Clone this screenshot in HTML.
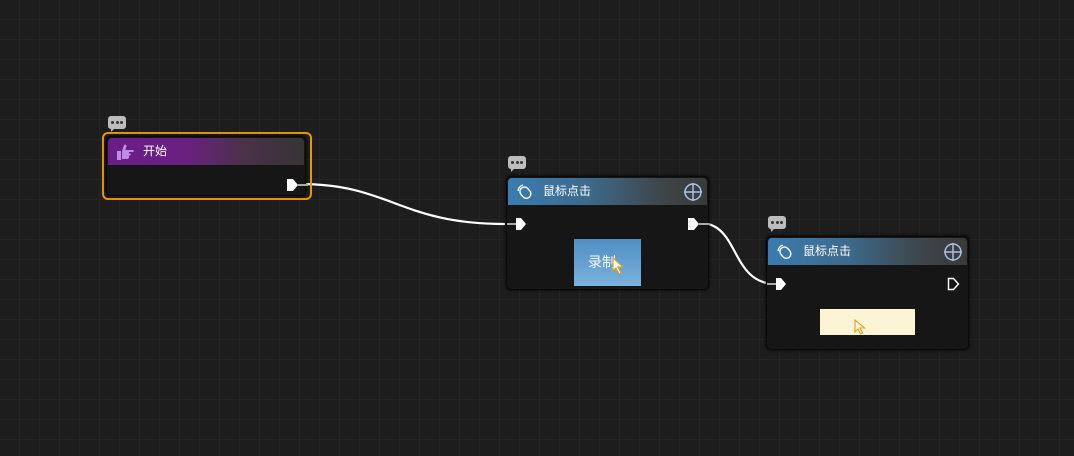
<!DOCTYPE html>
<html><head><meta charset="utf-8"><style>
*{margin:0;padding:0;box-sizing:border-box}
body{width:1074px;height:456px;overflow:hidden;background-color:#1d1d1d;
background-image:linear-gradient(#242424 1px,transparent 1px),linear-gradient(90deg,#242424 1px,transparent 1px);
background-size:20px 20px;background-position:0 19px,19px 0;font-family:"Liberation Sans","Noto Sans CJK SC",sans-serif;position:relative}
.node{position:absolute;background:#161616;border:1px solid #0a0a0a;border-radius:5px;box-shadow:0 0 3px #000}
.hdr{position:absolute;left:1px;right:1px;top:1px;height:27px;border-radius:4px 4px 0 0;color:#fff;font-size:12px;line-height:27px;padding-left:35px}
.cm{position:absolute;width:18px;height:13px;background:#bdbdbd;border-radius:3px}
.cm:after{content:"";position:absolute;left:3px;bottom:-3px;border:3px solid transparent;border-top-color:#bdbdbd;border-left-color:#bdbdbd}
.cm i{position:absolute;top:5px;width:3px;height:3px;background:#333;border-radius:50%}
</style></head><body>
<svg style="position:absolute;left:0;top:0" width="1074" height="456">
<path d="M300 184 C390 184,400 224,505 224" stroke="#fff" stroke-width="2.2" fill="none"/>
<path d="M700 223 C740 223,730 284,776 284" stroke="#fff" stroke-width="2.2" fill="none"/>
</svg>
<div class="cm" style="left:108px;top:116px"><i style="left:3px"></i><i style="left:7.5px"></i><i style="left:12px"></i></div>
<div style="position:absolute;left:102px;top:132px;width:210px;height:68px;border:2px solid #e8960a;border-radius:6px"></div>
<div class="node" style="left:106px;top:136px;width:200px;height:60px">
<div class="hdr" style="background:linear-gradient(90deg,#6a1d8a 0%,#6a2080 40%,#4a3248 70%,#363436 100%)">开始</div>
<svg style="position:absolute;left:8px;top:5px" width="20" height="20"><path d="M2 9h4v9H2z M7 9l2-6c1-1 2.5-0.5 2.5 1l-1 4h7.5c1 0 1 2 0 2h-4v1.5h1c1 0 1 2 0 2h-1v1.5c0 1-0.5 2-2 2H7z" fill="#c08be8"/></svg>
<svg style="position:absolute;left:179px;top:41px" width="22" height="14"><path d="M1 1h6l5 6-5 6H1z" fill="#fff"/><path d="M12 7h10" stroke="#aaa" stroke-width="2"/></svg>
</div>
<div class="cm" style="left:508px;top:156px"><i style="left:3px"></i><i style="left:7.5px"></i><i style="left:12px"></i></div>
<div class="node" style="left:506px;top:176px;width:203px;height:114px">
<div class="hdr" style="background:linear-gradient(90deg,#3a7cb0 0%,#3d6a8c 40%,#3e4448 78%,#3a3a3a 100%)">鼠标点击</div>
<svg style="position:absolute;left:8px;top:5px" width="20" height="20"><path d="M3 9A7 7 0 0 1 8 3" stroke="#fff" fill="none" stroke-width="1.4"/><rect x="6" y="5" width="9" height="12" rx="4.5" transform="rotate(-40 10 11)" stroke="#fff" fill="none" stroke-width="1.4"/></svg>
<svg style="position:absolute;left:176px;top:5px" width="20" height="20"><circle cx="10" cy="10" r="8" stroke="#aac0e8" fill="none" stroke-width="1.5"/><path d="M10 1v18M1 10h18" stroke="#aac0e8" stroke-width="1.5"/></svg>
<svg style="position:absolute;left:0;top:40px" width="24" height="14"><path d="M0 7h10" stroke="#aaa" stroke-width="2"/><path d="M9 1h5l5 6-5 6H9z" fill="#fff"/></svg>
<svg style="position:absolute;left:180px;top:40px" width="22" height="14"><path d="M1 1h6l5 6-5 6H1z" fill="#fff"/><path d="M12 7h10" stroke="#aaa" stroke-width="2"/></svg>
<div style="position:absolute;left:67px;top:62px;width:67px;height:47px;background:linear-gradient(#4f8fc4,#7ab2dc);color:#f4f8ff;font-size:14px;line-height:47px;padding-left:14px">录制</div>
<svg style="position:absolute;left:104px;top:80px" width="16" height="18"><path d="M2 1v13l3-3 3 6 2-1-3-6h5z" fill="#fff" stroke="#e0a020" stroke-width="1.2"/></svg>
</div>
<div class="cm" style="left:768px;top:216px"><i style="left:3px"></i><i style="left:7.5px"></i><i style="left:12px"></i></div>
<div class="node" style="left:766px;top:236px;width:203px;height:114px">
<div class="hdr" style="background:linear-gradient(90deg,#3a7cb0 0%,#3d6a8c 40%,#3e4448 78%,#3a3a3a 100%)">鼠标点击</div>
<svg style="position:absolute;left:8px;top:5px" width="20" height="20"><path d="M3 9A7 7 0 0 1 8 3" stroke="#fff" fill="none" stroke-width="1.4"/><rect x="6" y="5" width="9" height="12" rx="4.5" transform="rotate(-40 10 11)" stroke="#fff" fill="none" stroke-width="1.4"/></svg>
<svg style="position:absolute;left:176px;top:5px" width="20" height="20"><circle cx="10" cy="10" r="8" stroke="#aac0e8" fill="none" stroke-width="1.5"/><path d="M10 1v18M1 10h18" stroke="#aac0e8" stroke-width="1.5"/></svg>
<svg style="position:absolute;left:0;top:40px" width="24" height="14"><path d="M0 7h10" stroke="#aaa" stroke-width="2"/><path d="M9 1h5l5 6-5 6H9z" fill="#fff"/></svg>
<svg style="position:absolute;left:180px;top:40px" width="14" height="14"><path d="M1.5 1.5h5l5 5.5-5 5.5h-5z" fill="none" stroke="#fff" stroke-width="1.4"/></svg>
<div style="position:absolute;left:53px;top:72px;width:95px;height:26px;background:#fbf5d6"></div>
<svg style="position:absolute;left:86px;top:82px" width="14" height="16"><path d="M2 1v12l3-3 2.5 5 2-1-2.5-5h4.5z" fill="#fbf5d6" stroke="#e0a020" stroke-width="1.1"/></svg>
</div>
</body></html>
